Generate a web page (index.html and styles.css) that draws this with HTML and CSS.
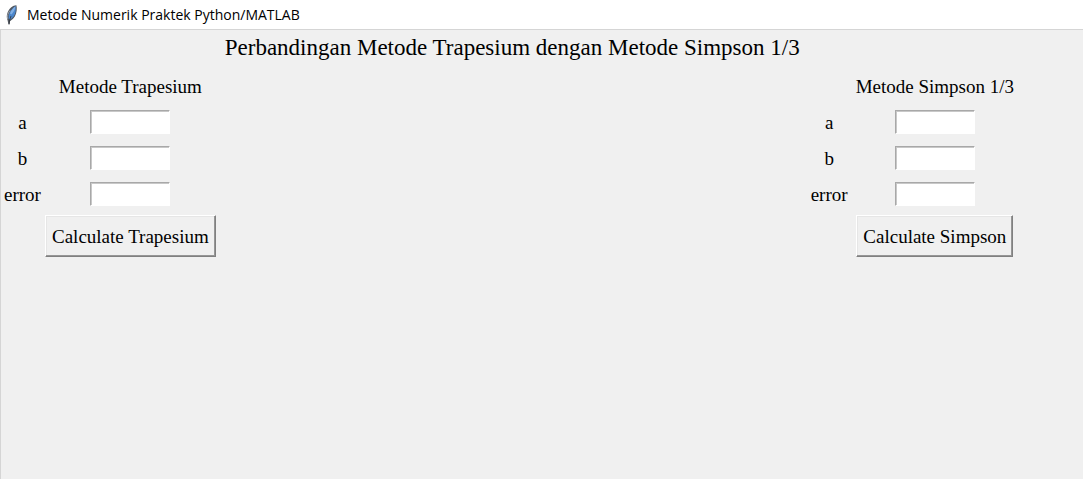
FILE: index.html
```html
<!DOCTYPE html>
<html lang="id">
<head>
<meta charset="utf-8">
<title>Metode Numerik Praktek Python/MATLAB</title>
<link rel="stylesheet" href="styles.css">
</head>
<body>
<header class="titlebar">
  <svg class="feather" viewBox="0 0 16 22" aria-hidden="true">
    <path d="M3.500 16C1.800 12 3.500 6.500 7 3.500C9 2 11 1.200 12.400 1.300C13.200 4.500 12.800 9 10.800 12.500C9.500 14.500 7.500 16.300 6 17.200L5.600 20.500H4.500z" fill="#50565f"/>
    <path d="M4.800 15C4 10.500 6 6 11.600 2C12.400 6.200 11.400 9.700 9.600 12.400C8.400 14 6.800 15 5.700 15.600z" fill="#4a86cc"/>
    <path d="M6 9.500C7 6.500 9 4.200 11.300 2.300C11.600 5 9.500 8 7.500 10.500z" fill="#82b0e4"/>
    <path d="M5 20C5.300 17 6 14.500 7 12" fill="none" stroke="#30343a" stroke-width=".8"/>
    <path d="M3.700 15C3 12 4 9 6 6.500" fill="none" stroke="#9da3ab" stroke-width="1"/>
  </svg>
  <span>Metode Numerik Praktek Python/MATLAB</span>
</header>
<main class="window">
  <h1 class="heading">Perbandingan Metode Trapesium dengan Metode Simpson 1/3</h1>
  <form class="method method-left">
    <h2 class="method-name">Metode Trapesium</h2>
    <label for="trap-a">a</label><input class="entry" id="trap-a" type="text">
    <label for="trap-b">b</label><input class="entry" id="trap-b" type="text">
    <label for="trap-error">error</label><input class="entry" id="trap-error" type="text">
    <button class="calculate" type="button">Calculate Trapesium</button>
  </form>
  <form class="method method-right">
    <h2 class="method-name">Metode Simpson 1/3</h2>
    <label for="simp-a">a</label><input class="entry" id="simp-a" type="text">
    <label for="simp-b">b</label><input class="entry" id="simp-b" type="text">
    <label for="simp-error">error</label><input class="entry" id="simp-error" type="text">
    <button class="calculate" type="button">Calculate Simpson</button>
  </form>
</main>
</body>
</html>
```
FILE: styles.css
```css
* {
  box-sizing: border-box;
}

body {
  margin: 0;
  min-height: 100vh;
  display: flex;
  flex-direction: column;
  background: #fff;
  color: #000;
}

.titlebar {
  display: flex;
  align-items: center;
  gap: 7px;
  height: 29px;
  padding-left: 4px;
  font: 14px/20px "Open Sans", "Noto Sans", sans-serif;
}

.feather {
  width: 16px;
  height: 22px;
}

.window {
  flex: 1;
  display: grid;
  grid-template-columns: auto 1fr auto;
  grid-template-rows: 38px auto;
  align-content: start;
  padding-right: 64px;
  border-top: 1px solid #d5d5d5;
  border-left: 1px solid #d5d5d5;
  background: #f0f0f0;
  font: 19px/24px "Liberation Serif", "Times New Roman", serif;
}

.heading {
  grid-column: 2;
  margin: 0;
  font-size: 23px;
  font-weight: 400;
  line-height: 36px;
  text-align: center;
  white-space: nowrap;
}

.method {
  grid-row: 2;
  display: grid;
  grid-template-columns: 43px auto;
  grid-template-rows: repeat(4, 36px) auto;
  align-items: center;
  justify-items: center;
}

.method-left {
  grid-column: 1;
}

.method-right {
  grid-column: 3;
}

.method label {
  padding-top: 2px;
}

.method-name {
  grid-column: 2;
  margin: 0;
  padding: 2px 5px 0;
  font-size: 19px;
  font-weight: 400;
}

.entry {
  width: 80px;
  height: 24px;
  padding: 0 2px;
  border: 1px solid;
  border-color: #a8a8a8 #fff #fff #a8a8a8;
  border-radius: 0;
  background: #fff;
  box-shadow: inset 1px 1px #c8c8c8;
  font: inherit;
}

.calculate {
  grid-column: 2;
  height: 42px;
  margin: 3px 1px 0;
  padding: 2px 6px 0;
  border: 1px solid;
  border-color: #fff #808080 #808080 #fff;
  border-radius: 0;
  background: #f0f0f0;
  box-shadow: inset -1px -1px #969696, inset 1px 1px #e6e6e6;
  color: #000;
  font: inherit;
}
```
